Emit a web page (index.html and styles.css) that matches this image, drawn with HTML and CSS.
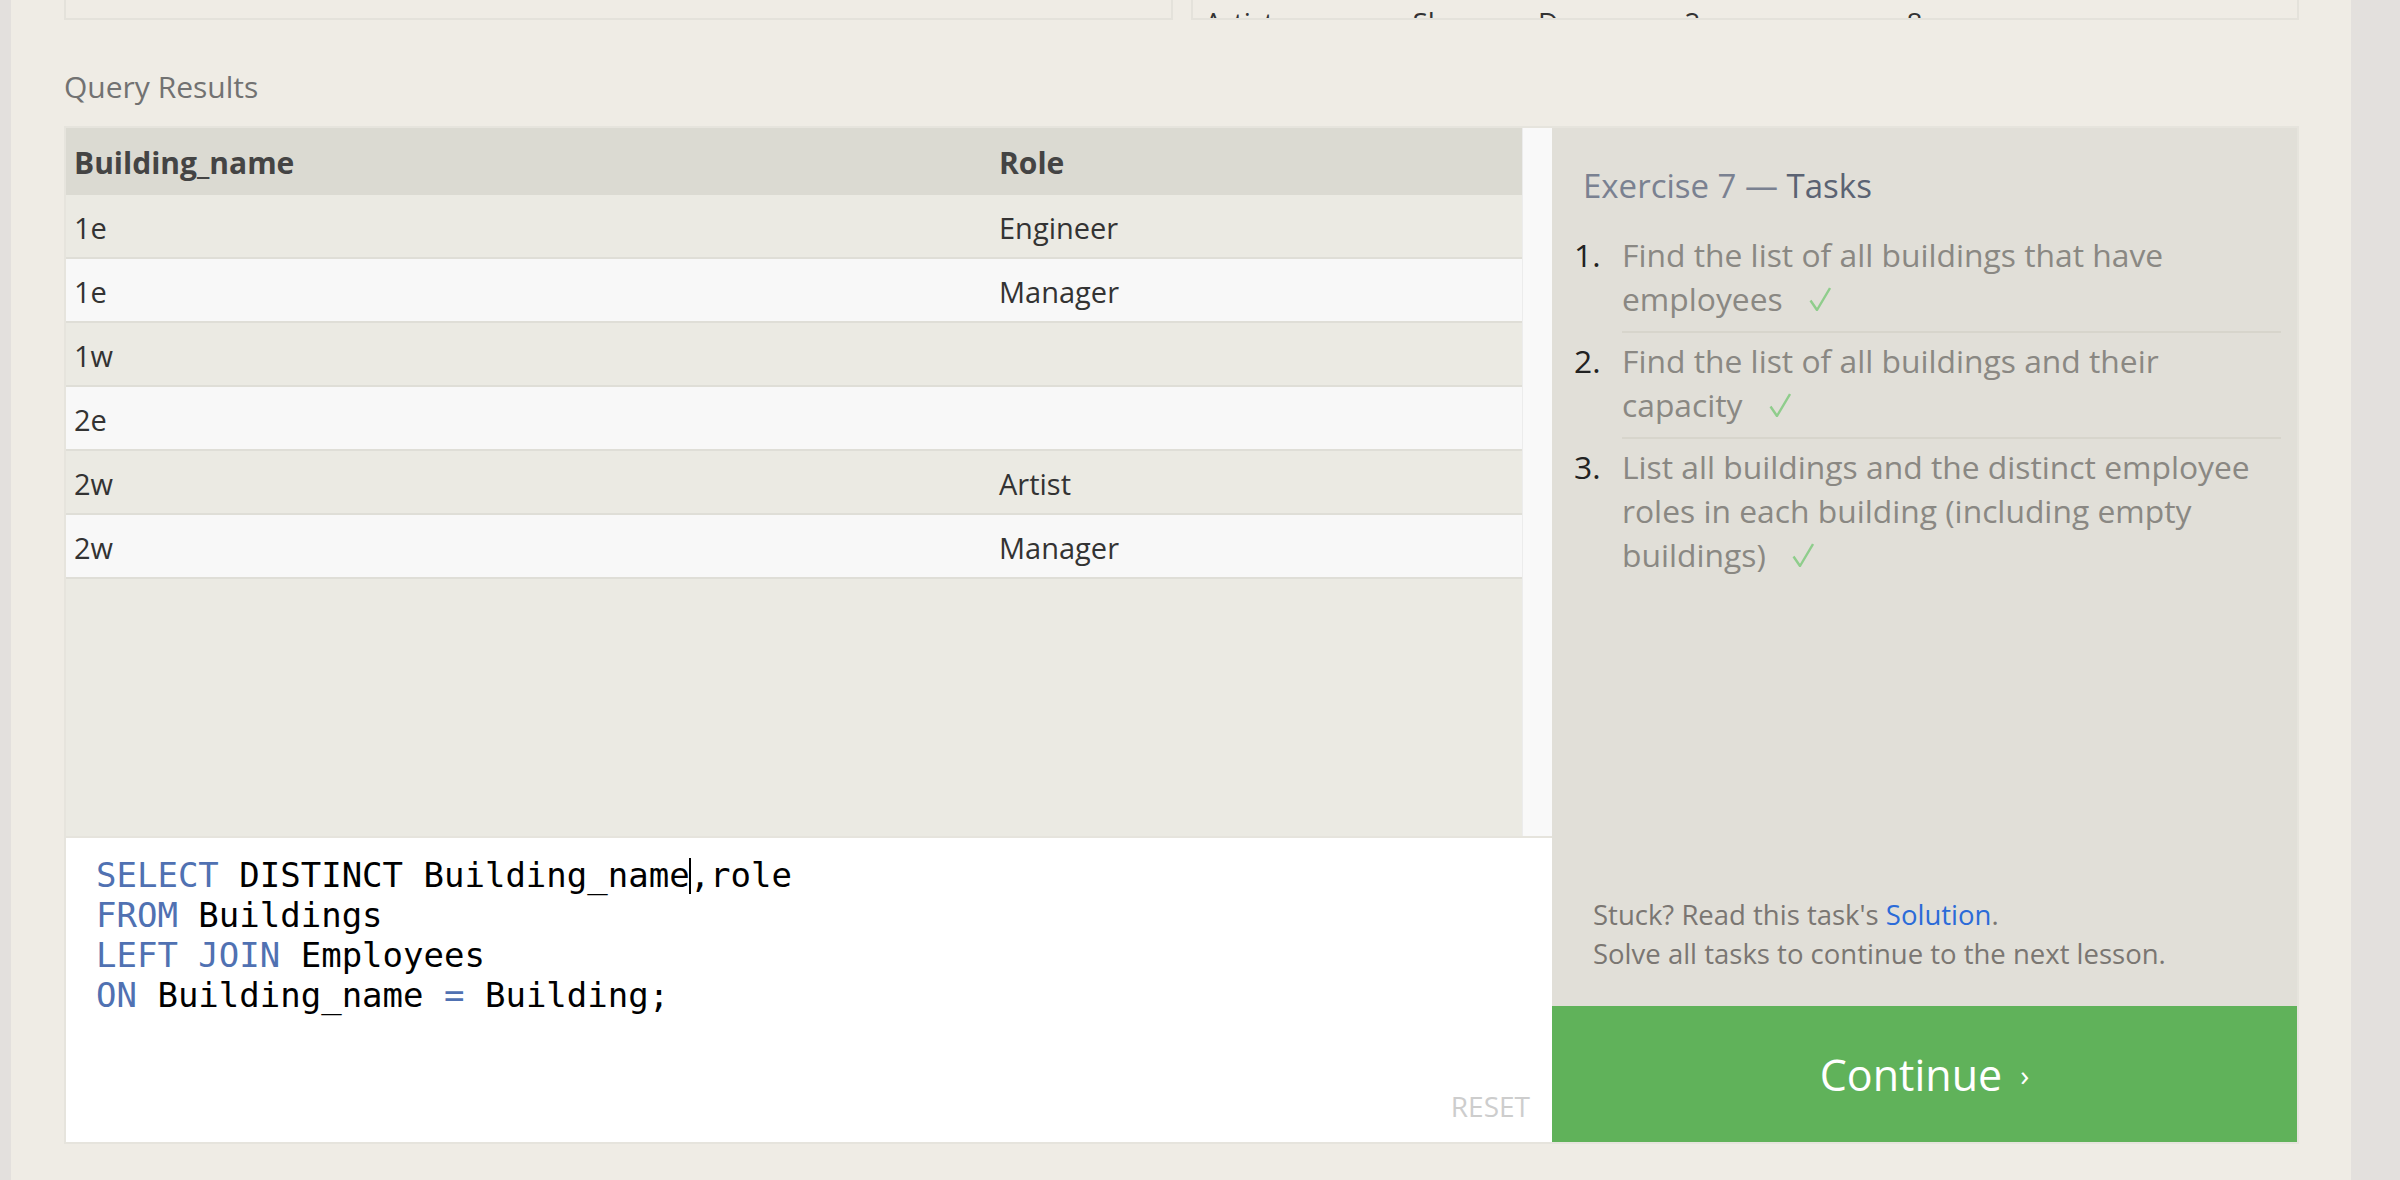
FILE: index.html
```html
<!DOCTYPE html>
<html lang="en">
<head>
<meta charset="utf-8">
<title>SQLBolt - Exercise 7</title>
<link rel="stylesheet" href="styles.css">
</head>
<body>
<div class="page">
  <div class="prev">
    <div class="prev-panel"></div>
    <div class="prev-panel">
      <div class="prev-row"><span>Artist</span><span>Sherman D.</span><span>2w</span><span>8</span></div>
    </div>
  </div>

  <div class="label">Query Results</div>

  <div class="workspace">
    <div class="left">
      <div class="results">
        <div class="table">
          <div class="row head"><div class="cell">Building_name</div><div class="cell">Role</div></div>
          <div class="row odd"><div class="cell">1e</div><div class="cell">Engineer</div></div>
          <div class="row even"><div class="cell">1e</div><div class="cell">Manager</div></div>
          <div class="row odd"><div class="cell">1w</div><div class="cell"></div></div>
          <div class="row even"><div class="cell">2e</div><div class="cell"></div></div>
          <div class="row odd"><div class="cell">2w</div><div class="cell">Artist</div></div>
          <div class="row even"><div class="cell">2w</div><div class="cell">Manager</div></div>
        </div>
        <div class="scrollbar"></div>
      </div>
      <div class="editor">
<pre class="code"><span class="kw">SELECT</span> DISTINCT Building_name<span class="caret"></span>,role
<span class="kw">FROM</span> Buildings
<span class="kw">LEFT JOIN</span> Employees
<span class="kw">ON</span> Building_name <span class="kw">=</span> Building;</pre>
        <div class="reset">RESET</div>
      </div>
    </div>

    <div class="right">
      <div class="tasks">
        <h2 class="title"><span class="ex">Exercise 7 — </span><span class="tk">Tasks</span></h2>
        <ol class="task-list">
          <li class="task"><span class="num">1.</span><span class="text">Find the list of all buildings that have employees <svg class="check" viewBox="0 0 22 24" width="22" height="24"><path d="M1.5 13.5 L8 23 L21 1" fill="none" stroke="#8fcd8c" stroke-width="2.4" stroke-linejoin="round"/></svg></span></li>
          <li class="task"><span class="num">2.</span><span class="text">Find the list of all buildings and their capacity <svg class="check" viewBox="0 0 22 24" width="22" height="24"><path d="M1.5 13.5 L8 23 L21 1" fill="none" stroke="#8fcd8c" stroke-width="2.4" stroke-linejoin="round"/></svg></span></li>
          <li class="task"><span class="num">3.</span><span class="text">List all buildings and the distinct employee roles in each building (including empty buildings) <svg class="check" viewBox="0 0 22 24" width="22" height="24"><path d="M1.5 13.5 L8 23 L21 1" fill="none" stroke="#8fcd8c" stroke-width="2.4" stroke-linejoin="round"/></svg></span></li>
        </ol>
        <div class="footer">
          <p>Stuck? Read this task's <a class="link" href="#">Solution</a>.</p>
          <p>Solve all tasks to continue to the next lesson.</p>
        </div>
      </div>
      <div class="continue">Continue<span class="chev">›</span></div>
    </div>
  </div>
</div>
</body>
</html>
```

FILE: styles.css
```css
html, body {
  margin: 0;
  padding: 0;
}

body {
  background: #e3e0dd;
  font-family: "Open Sans", "Noto Sans", sans-serif;
}

.page {
  margin-left: 11px;
  width: 2340px;
  min-height: 1180px;
  box-sizing: border-box;
  padding: 0 52px 0 53px;
  background: #efece5;
}

/* previous tables, scrolled mostly out of view */
.prev {
  display: grid;
  grid-template-columns: 1fr 1fr;
  gap: 18px;
}

.prev-panel {
  height: 18px;
  border: 2px solid #e4e2db;
  border-top: 0;
  overflow: hidden;
}

.prev-row {
  display: grid;
  grid-template-columns: 208px 272px 222px 1fr;
  padding: 2px 0 0 12px;
  font-size: 28px;
  line-height: 40px;
  color: #333;
}

.label {
  margin: 47px 0 19px;
  font-size: 30px;
  line-height: 40px;
  color: #727272;
}

/* main workspace */
.workspace {
  display: grid;
  grid-template-columns: 1486px 745px;
  border: 2px solid #e6e4dd;
}

.left {
  display: flex;
  flex-direction: column;
}

.results {
  display: flex;
  height: 708px;
  background: #ebeae3;
}

.table {
  width: 1456px;
}

.row {
  display: grid;
  grid-template-columns: 925px 1fr;
  height: 62px;
  border-bottom: 2px solid #dfded7;
}

.cell {
  padding: 4px 0 0 8px;
  font-size: 29px;
  line-height: 58px;
  color: #333;
  white-space: nowrap;
}

.head {
  height: 67px;
  border-bottom: 0;
  background: #dbdad2;
}

.head .cell {
  font-size: 30px;
  font-weight: 700;
  line-height: 62px;
  color: #444;
}

.odd {
  background: #ebeae3;
}

.even {
  background: #f8f8f8;
}

.scrollbar {
  width: 29px;
  border-left: 1px solid #ececec;
  background: #f9f9f9;
}

.editor {
  height: 304px;
  border-top: 2px solid #e6e4dd;
  background: #ffffff;
  display: flex;
  flex-direction: column;
}

.code {
  margin: 0;
  padding: 17px 0 0 30px;
  font-family: "DejaVu Sans Mono", monospace;
  font-size: 34px;
  line-height: 40px;
  color: #000;
}

.kw {
  color: #5071b2;
}

.caret {
  display: inline-block;
  width: 2px;
  height: 36px;
  margin: 0 -1px;
  background: #000;
  vertical-align: -7px;
}

.reset {
  margin-top: auto;
  align-self: flex-end;
  padding: 0 22px 21px 0;
  font-size: 28px;
  line-height: 30px;
  color: #cdcdcd;
}

/* tasks column */
.right {
  display: flex;
  flex-direction: column;
}

.tasks {
  flex: 1;
  display: flex;
  flex-direction: column;
  background: #e1dfd8;
  padding: 36px 16px 33px 22px;
}

.title {
  margin: 0;
  padding-left: 9px;
  font-size: 33px;
  font-weight: 400;
  line-height: 44px;
}

.ex {
  color: #7a8191;
}

.tk {
  color: #5b6373;
}

.task-list {
  margin: 19px 0 0;
  padding: 0;
  list-style: none;
}

.task {
  display: grid;
  grid-template-columns: 48px 1fr;
  font-size: 31.8px;
  line-height: 44px;
}

.num {
  padding-top: 6px;
  color: #222;
}

.text {
  padding: 6px 18px 10px 0;
  border-bottom: 2px solid #d7d5cc;
  color: #8a8883;
}

.task:last-child .text {
  border-bottom: 0;
}

.check {
  margin-left: 18px;
  vertical-align: baseline;
}

.footer {
  margin-top: auto;
  padding-left: 19px;
  font-size: 27.5px;
  line-height: 39px;
  color: #7a7672;
}

.footer p {
  margin: 0;
}

.link {
  color: #2b6bd8;
  text-decoration: none;
}

.continue {
  height: 136px;
  display: flex;
  align-items: center;
  justify-content: center;
  background: #60b25a;
  color: #ffffff;
  font-size: 43px;
}

.chev {
  margin-left: 18px;
  font-size: 30px;
}
```
